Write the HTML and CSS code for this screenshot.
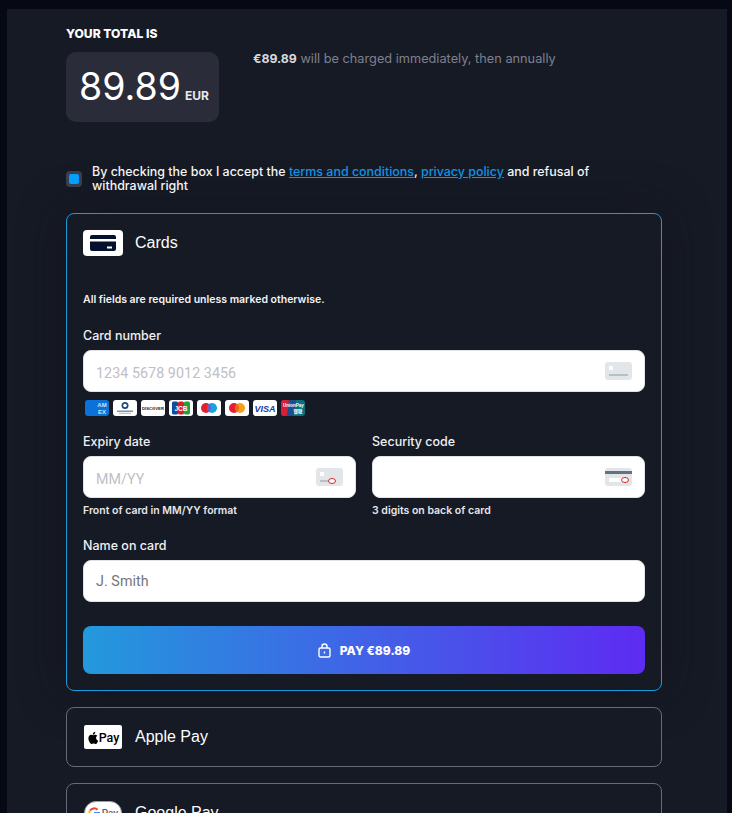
FILE: index.html
```html
<!DOCTYPE html>
<html lang="en">
<head>
<meta charset="utf-8">
<title>Checkout</title>
<link rel="stylesheet" href="styles.css">
</head>
<body>
<main class="panel">
  <section class="total">
    <h2 class="total-title">YOUR TOTAL IS</h2>
    <div class="total-row">
      <div class="amount"><span class="amount-num">89.89</span><span class="amount-cur">EUR</span></div>
      <p class="charge"><strong>€89.89</strong> will be charged immediately, then annually</p>
    </div>
  </section>
  <label class="terms">
    <span class="check"><span class="check-dot"></span></span>
    <span class="terms-text">By checking the box I accept the <a href="#">terms and conditions</a>, <a href="#">privacy policy</a> and refusal of withdrawal right</span>
  </label>
  <section class="method method-open">
    <div class="method-head">
      <span class="logo logo-card">
        <svg width="26" height="16" viewBox="0 0 26 16"><path fill="#04102e" d="M2 0h22a2 2 0 0 1 2 2v2H0V2a2 2 0 0 1 2-2zM0 6.500h26V14a2 2 0 0 1-2 2H2a2 2 0 0 1-2-2zM17 11.500v2h5v-2z" fill-rule="evenodd"/></svg>
      </span>
      <span class="method-name">Cards</span>
    </div>
    <p class="req">All fields are required unless marked otherwise.</p>
    <div class="field">
      <div class="label">Card number</div>
      <div class="input"><span class="ph ph-low">1234 5678 9012 3456</span>
        <svg class="hint" width="27" height="18" viewBox="0 0 27 18"><rect width="27" height="18" rx="3" fill="#e3e6e8"/><rect x="4" y="4" width="4" height="4" fill="#fff"/><rect x="4" y="12" width="19" height="2" fill="#b9c0c4"/></svg>
      </div>
      <div class="brands">
        <svg width="24" height="16" viewBox="0 0 24 16"><rect width="24" height="16" rx="3" fill="#0a72d8"/><text x="17" y="7" class="b-t" fill="#cfe4f7" text-anchor="middle">AM</text><text x="17" y="13.500" class="b-t" fill="#cfe4f7" text-anchor="middle">EX</text></svg>
        <svg width="24" height="16" viewBox="0 0 24 16"><rect width="24" height="16" rx="3" fill="#fff"/><circle cx="12" cy="5.500" r="3.500" fill="#1c4a7e"/><circle cx="12" cy="5.500" r="1.800" fill="#fff"/><rect x="4" y="10.500" width="16" height="1.500" fill="#8a919b"/><rect x="6" y="12.800" width="12" height="1" fill="#b0b5bc"/></svg>
        <svg width="24" height="16" viewBox="0 0 24 16"><rect width="24" height="16" rx="3" fill="#fff"/><text x="12" y="9.700" class="b-d" fill="#222" text-anchor="middle">DISCOVER</text><circle cx="13" cy="8" r="1.300" fill="#f58220"/></svg>
        <svg width="24" height="16" viewBox="0 0 24 16"><rect width="24" height="16" rx="3" fill="#fff"/><rect x="3" y="1.500" width="6" height="13" rx="1.500" fill="#0b4ea2"/><rect x="9" y="1.500" width="6" height="13" rx="1.500" fill="#d3222a"/><rect x="15" y="1.500" width="6" height="13" rx="1.500" fill="#2b9b46"/><text x="12" y="10.500" class="b-j" fill="#fff" text-anchor="middle">JCB</text></svg>
        <svg width="24" height="16" viewBox="0 0 24 16"><rect width="24" height="16" rx="3" fill="#fff"/><circle cx="9" cy="8" r="5" fill="#e3202e"/><circle cx="15" cy="8" r="5" fill="#18a3e0"/><path d="M12 4a5 5 0 0 1 0 8a5 5 0 0 1 0-8z" fill="#6c5fc7"/></svg>
        <svg width="24" height="16" viewBox="0 0 24 16"><rect width="24" height="16" rx="3" fill="#fff"/><circle cx="9" cy="8" r="5" fill="#e3202e"/><circle cx="15" cy="8" r="5" fill="#f79e1b"/><path d="M12 4a5 5 0 0 1 0 8a5 5 0 0 1 0-8z" fill="#f26122"/></svg>
        <svg width="24" height="16" viewBox="0 0 24 16"><rect width="24" height="16" rx="3" fill="#fff"/><text x="12" y="11.500" class="b-v" fill="#1a38a8" text-anchor="middle">VISA</text></svg>
        <svg width="24" height="16" viewBox="0 0 24 16"><rect width="24" height="16" rx="3" fill="#0e6f7c"/><path d="M3 0h5l-2 16H3a3 3 0 0 1-3-3V3a3 3 0 0 1 3-3z" fill="#d81e34"/><path d="M8 0h7l-2 16H6z" fill="#1d4f8f"/><text x="12.500" y="7" class="b-u" fill="#fff" text-anchor="middle">UnionPay</text><text x="17" y="12.500" class="b-u" fill="#fff" text-anchor="middle">银联</text></svg>
      </div>
    </div>
    <div class="split">
      <div class="field-half">
        <div class="label">Expiry date</div>
        <div class="input"><span class="ph ph-low">MM/YY</span>
          <svg class="hint" width="27" height="18" viewBox="0 0 27 18"><rect width="27" height="18" rx="3" fill="#e3e6e8"/><rect x="4" y="4" width="4" height="4" fill="#fff"/><rect x="4" y="12" width="9" height="2" fill="#b9c0c4"/><ellipse cx="16" cy="13" rx="3.500" ry="2.500" fill="#fff" stroke="#d8232a"/></svg>
        </div>
        <div class="help">Front of card in MM/YY format</div>
      </div>
      <div class="field-half">
        <div class="label">Security code</div>
        <div class="input">
          <svg class="hint" width="27" height="18" viewBox="0 0 27 18"><rect width="27" height="18" rx="3" fill="#e3e6e8"/><rect y="3" width="27" height="3" fill="#687082"/><rect x="4" y="10" width="17" height="4" fill="#fff"/><ellipse cx="20" cy="12" rx="3.500" ry="2.500" fill="#fff" stroke="#d8232a"/></svg>
        </div>
        <div class="help">3 digits on back of card</div>
      </div>
    </div>
    <div class="field field-name">
      <div class="label">Name on card</div>
      <div class="input"><span class="ph ph-dark">J. Smith</span></div>
    </div>
    <button class="pay" type="button">
      <svg width="13" height="15" viewBox="0 0 13 15" fill="none" stroke="#fff" stroke-width="1.400"><rect x="1" y="5" width="11" height="9" rx="1.500"/><path d="M4 5V3.500a2.500 2.500 0 0 1 5 0V5"/><path d="M6.500 8.500v2"/></svg>
      <span>PAY €89.89</span>
    </button>
  </section>
  <section class="method">
    <div class="method-head method-head-closed">
      <span class="logo logo-apple">
        <svg width="11" height="13" viewBox="0 0 12 14"><path fill="#000" d="M9.900 7.400c0-1.500 1.200-2.200 1.300-2.300-.7-1-1.800-1.200-2.200-1.200-.9-.1-1.800.6-2.300.6s-1.200-.5-2-.5C3.700 4 2.700 4.600 2.100 5.500.9 7.600 1.800 10.700 3 12.400c.6.800 1.200 1.700 2.100 1.700.8 0 1.100-.5 2.100-.5s1.300.5 2.100.5c.9 0 1.500-.8 2-1.700.6-.9.900-1.800.9-1.900 0 0-2.300-.8-2.300-3.100zM8.300 2.900C8.800 2.300 9.100 1.500 9 .7c-.7 0-1.500.5-2 1.100-.4.500-.8 1.300-.7 2.100.8 0 1.500-.5 2-1z"/></svg>
        <span class="apple-pay">Pay</span>
      </span>
      <span class="method-name">Apple Pay</span>
    </div>
  </section>
  <section class="method">
    <div class="method-head method-head-closed">
      <span class="logo logo-google">
        <svg width="12" height="12" viewBox="0 0 12 12" fill="none" stroke-width="2"><path stroke="#ea4335" d="M9.500 2.700A5 5 0 0 0 2 3.500"/><path stroke="#fbbc05" d="M2 3.500a5 5 0 0 0 0 5"/><path stroke="#34a853" d="M2 8.500a5 5 0 0 0 7.500 .8"/><path stroke="#4285f4" d="M9.500 9.300A5 5 0 0 0 11 6H6"/></svg>
        <span class="google-pay">Pay</span>
      </span>
      <span class="method-name">Google Pay</span>
    </div>
  </section>
</main>
</body>
</html>
```
FILE: styles.css
```css
html, body {
  margin: 0;
  height: 813px;
  overflow: hidden;
}
body {
  background: #060914;
  padding-top: 9px;
  box-sizing: border-box;
  font-family: Inter, "Noto Sans", sans-serif;
  color: #fff;
}
.panel {
  margin: 0 5px 0 7px;
  padding: 0 65px 0 59px;
  background: #161a25;
  min-height: 804px;
}
.total-title {
  margin: 0;
  padding-top: 18px;
  font-size: 12.100px;
  line-height: 14px;
  font-weight: 800;
}
.total-row {
  display: flex;
  margin-top: 11px;
}
.amount {
  width: 153px;
  height: 70px;
  box-sizing: border-box;
  background: #2a2c3a;
  border-radius: 10px;
  padding: 0 9px 0 13px;
  display: flex;
  align-items: baseline;
  line-height: 69px;
}
.amount-num {
  font-size: 37.500px;
  font-weight: 400;
}
.amount-cur {
  margin-left: 4px;
  font-size: 12px;
  font-weight: 700;
  color: #e8e8ec;
}
.charge {
  margin: 0 0 0 34px;
  font-size: 12.750px;
  line-height: 14px;
  color: #7d808e;
}
.charge strong {
  color: #d8d9de;
  font-size: 12.300px;
  font-weight: 700;
}
.terms {
  display: flex;
  align-items: center;
  margin-top: 43px;
  gap: 10px;
  font-size: 12.450px;
  line-height: 14px;
  font-weight: 500;
  color: #f4f4f6;
}
.terms a {
  color: #1193e4;
}
.check {
  flex: none;
  width: 16px;
  height: 16px;
  border-radius: 4px;
  background: #3a3d4b;
  display: flex;
  align-items: center;
  justify-content: center;
}
.check-dot {
  width: 10px;
  height: 10px;
  border-radius: 2px;
  background: #02a0fc;
}
.terms-text {
  width: 505px;
}
.method {
  margin-top: 16px;
  border: 1px solid #666b7b;
  border-radius: 8px;
  background: #161a25;
}
.method-open {
  margin-top: 20px;
  border-color: #1b9ae0;
  padding: 0 16px 16px;
  box-shadow: 0 0 44px rgba(18, 18, 24, .6);
}
.method-head {
  display: flex;
  align-items: center;
  gap: 12px;
  height: 26px;
  padding-top: 16px;
}
.method-head-closed {
  padding: 16px 17px;
  height: 26px;
  gap: 13px;
}
.logo {
  width: 40px;
  height: 26px;
  box-sizing: border-box;
  border-radius: 4px;
  background: #fff;
  display: flex;
  align-items: center;
  justify-content: center;
  flex: none;
}
.logo-apple {
  width: 38px;
  height: 24px;
  border-radius: 2px;
  gap: 1px;
}
.logo-google {
  width: 38px;
  height: 24px;
  border-radius: 12px;
  gap: 2px;
  border: 1px solid #9a9da5;
}
.apple-pay, .google-pay {
  font-family: Roboto, sans-serif;
  font-size: 12.500px;
  color: #000;
  font-weight: 500;
}
.google-pay {
  color: #5f6368;
  font-size: 10px;
}
.method-name {
  font-family: "Liberation Sans", Roboto, sans-serif;
  font-size: 16px;
  color: #fdfdfd;
}
.req {
  margin: 37px 0 0;
  font-size: 10.500px;
  line-height: 14px;
  font-weight: 600;
  color: #f2f2f4;
}
.field {
  margin-top: 21px;
}
.label {
  font-size: 12.500px;
  line-height: 16px;
  font-weight: 500;
  color: #f0f0f3;
  margin-bottom: 6px;
}
.input {
  height: 42px;
  box-sizing: border-box;
  background: #fff;
  border: 1px solid #e0e2e6;
  border-radius: 8px;
  padding: 0 12px;
  display: flex;
  align-items: center;
  justify-content: space-between;
}
.ph {
  font-family: Roboto, sans-serif;
  font-size: 14.300px;
  letter-spacing: .05px;
  color: #c0c0c4;
}
.ph-low {
  padding-top: 3px;
}
.ph-dark {
  color: #75757a;
}
.hint {
  margin-left: auto;
}
.brands {
  display: flex;
  gap: 4px;
  margin: 8px 0 0 2px;
  height: 16px;
}
.b-t { font: 700 6px "Liberation Sans", sans-serif; }
.b-d { font: 700 4.200px "Liberation Sans", sans-serif; }
.b-j { font: 700 6.500px "Liberation Sans", sans-serif; }
.b-v { font: italic 700 9px "Liberation Sans", sans-serif; }
.b-u { font: 700 4.500px "Liberation Sans", "Noto Sans CJK SC", sans-serif; }
.split {
  display: flex;
  gap: 16px;
  margin-top: 18px;
}
.field-half {
  flex: 1;
  min-width: 0;
}
.help {
  margin-top: 7px;
  font-size: 10.500px;
  line-height: 12px;
  font-weight: 600;
  color: #e6e6ea;
}
.field-name {
  margin-top: 21px;
}
.pay {
  margin-top: 24px;
  width: 100%;
  height: 48px;
  border: 0;
  border-radius: 8px;
  background: linear-gradient(90deg, #2399dc, #5e2bf2);
  color: #fff;
  font-family: inherit;
  font-size: 12px;
  font-weight: 800;
  display: flex;
  align-items: center;
  justify-content: center;
  gap: 9px;
}
```
